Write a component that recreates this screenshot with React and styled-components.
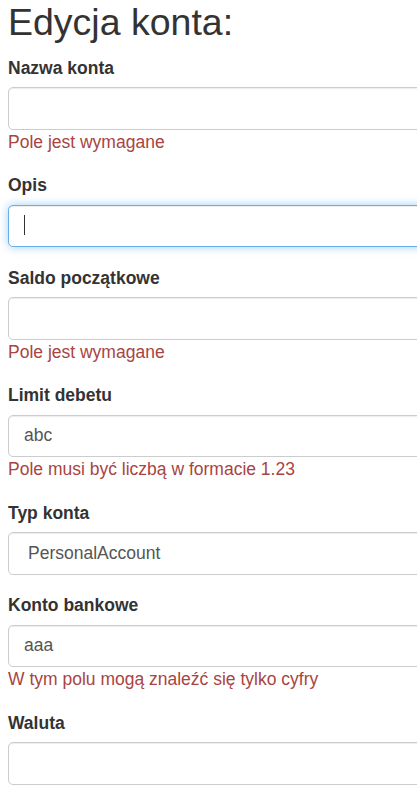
import React from "react";
import styled, { createGlobalStyle, css } from "styled-components";

const Global = createGlobalStyle`
  html, body {
    margin: 0;
    padding: 0;
    overflow: hidden;
    background: #fff;
  }
  body {
    font-family: "Liberation Sans", Arial, Helvetica, sans-serif;
    font-size: 17.5px;
    line-height: 25px;
    color: #333;
  }
  * { box-sizing: border-box; }
`;

const Page = styled.div`
  padding: 2px 0 0 8px;
  width: 440px;
`;

const Title = styled.h2`
  margin: 0 0 12.5px;
  font-size: 37.5px;
  line-height: 41.25px;
  font-weight: 500;
  color: #333;
`;

const Form = styled.form`
  display: flex;
  flex-direction: column;
`;

const Group = styled.div`
  display: flex;
  flex-direction: column;
  margin-bottom: 18.75px;
`;

const Label = styled.label`
  display: block;
  font-weight: bold;
  margin-bottom: 6.25px;
  line-height: 25px;
`;

const fieldBase = css`
  display: block;
  width: 100%;
  height: 42.5px;
  padding: 7.5px 15px;
  font-family: "Liberation Sans", Arial, Helvetica, sans-serif;
  font-size: 17.5px;
  line-height: 25px;
  color: #555;
  background: #fff;
  border: 1px solid #ccc;
  border-radius: 5px;
  box-shadow: inset 0 1px 1px rgba(0, 0, 0, 0.075);
  outline: none;
  ${(p) =>
    p.$focused &&
    css`
      border-color: #66afe9;
      box-shadow: inset 0 1px 1px rgba(0, 0, 0, 0.075),
        0 0 10px rgba(102, 175, 233, 0.6);
    `}
`;

const Input = styled.input`
  ${fieldBase}
`;

const Select = styled.select`
  ${fieldBase}
  appearance: none;
  -webkit-appearance: none;
  padding-left: 19px;
`;

const FieldWrap = styled.div`
  position: relative;
`;

const Caret = styled.span`
  position: absolute;
  left: 16px;
  top: 10px;
  width: 1px;
  height: 20px;
  background: #333;
`;

const ErrorText = styled.div`
  color: #a94442;
  line-height: 25px;
`;

const fields = [
  { label: "Nazwa konta", value: "", error: "Pole jest wymagane" },
  { label: "Opis", value: "", focused: true },
  { label: "Saldo początkowe", value: "", error: "Pole jest wymagane" },
  { label: "Limit debetu", value: "abc", error: "Pole musi być liczbą w formacie 1.23" },
  { label: "Typ konta", value: "PersonalAccount", select: true },
  { label: "Konto bankowe", value: "aaa", error: "W tym polu mogą znaleźć się tylko cyfry" },
  { label: "Waluta", value: "" },
];

export default function App() {
  return (
    <Page>
      <Global />
      <Title>Edycja konta:</Title>
      <Form onSubmit={(e) => e.preventDefault()}>
        {fields.map((f, i) => (
          <Group key={i}>
            <Label htmlFor={"f" + i}>{f.label}</Label>
            {f.select ? (
              <Select id={"f" + i} defaultValue={f.value}>
                <option value="PersonalAccount">PersonalAccount</option>
              </Select>
            ) : (
              <FieldWrap>
                <Input id={"f" + i} type="text" defaultValue={f.value} $focused={f.focused} />
                {f.focused && <Caret />}
              </FieldWrap>
            )}
            {f.error && <ErrorText>{f.error}</ErrorText>}
          </Group>
        ))}
      </Form>
    </Page>
  );
}
